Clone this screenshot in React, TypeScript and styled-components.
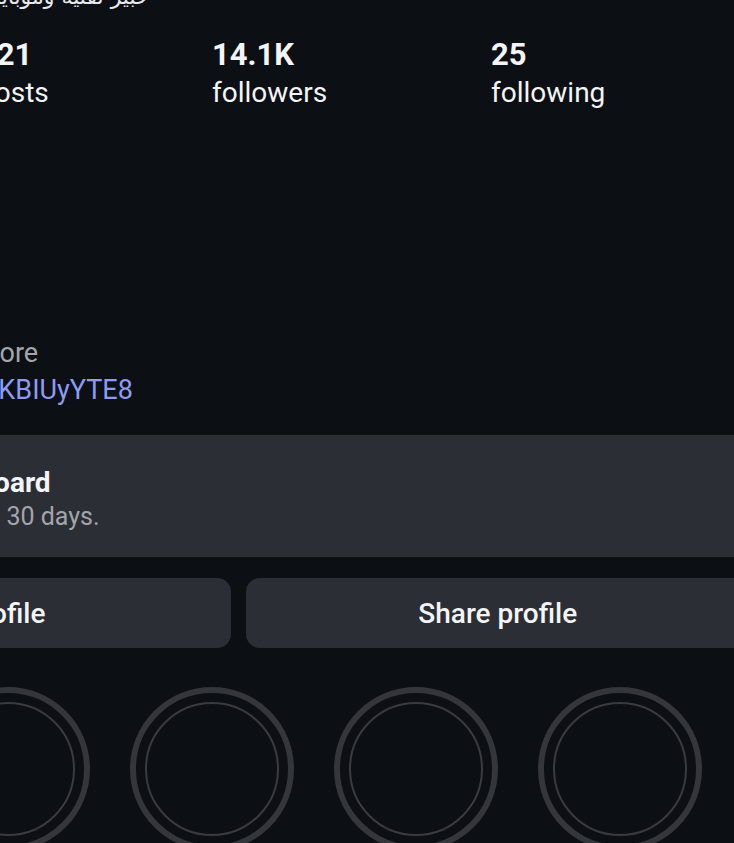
import styled, { createGlobalStyle } from 'styled-components';

const GlobalStyle = createGlobalStyle`
    html, body {
        margin: 0;
        background: #0c0f14;
    }

    body {
        font-family: Roboto, "Noto Sans", "DejaVu Sans", sans-serif;
        color: #f3f4f6;
    }
`;

const Viewport = styled.div`
    width: 734px;
    height: 843px;
    overflow: hidden;
    background: #0c0f14;
`;

const Screen = styled.div`
    width: 1080px;
    margin: -20px 0 0 -302px;
    padding: 0 28px;
    box-sizing: border-box;
`;

const Header = styled.div`
    display: flex;
    gap: 29px;
    height: 355px;
`;

const Avatar = styled.div`
    width: 230px;
    height: 230px;
    margin-top: 40px;
    border-radius: 50%;
    background: #1c1f25;
    flex-shrink: 0;
`;

const Info = styled.div`
    display: flex;
    flex-direction: column;
`;

const Name = styled.div`
    font-family: "DejaVu Sans", "Noto Sans", sans-serif;
    font-size: 22px;
    line-height: 33px;
    height: 33px;
    text-align: left;
    color: #e8e9eb;
`;

const Stats = styled.div`
    display: grid;
    grid-template-columns: 233px 279px auto;
    margin: 23px 0 0 -6px;
`;

const Stat = styled.div`
    display: flex;
    flex-direction: column;
`;

const StatValue = styled.span`
    font-size: 31px;
    font-weight: 700;
    line-height: 38px;
`;

const StatLabel = styled.span`
    font-size: 28px;
    line-height: 38px;
`;

const Bio = styled.div`
    font-size: 27px;
    line-height: 37px;
    white-space: nowrap;
`;

const More = styled.span`
    color: #a4a6ab;
`;

const BioLink = styled.div`
    color: #8d9cf2;
`;

const DashboardCard = styled.div`
    margin-top: 26px;
    height: 122px;
    box-sizing: border-box;
    padding: 31px 26px 0;
    background: #2b2e34;
    border-radius: 14px;
`;

const CardTitle = styled.div`
    font-size: 28px;
    font-weight: 700;
    line-height: 34px;
`;

const CardText = styled.div`
    font-size: 25px;
    line-height: 33px;
    color: #a2a5ab;
`;

const Actions = styled.div`
    display: grid;
    grid-template-columns: 1fr 1fr;
    gap: 15px;
    margin-top: 21px;
`;

const ActionButton = styled.button`
    height: 70px;
    border: none;
    border-radius: 14px;
    background: #2b2e34;
    color: #f3f4f6;
    font-family: Roboto, sans-serif;
    font-size: 28px;
    font-weight: 500;
`;

const Highlights = styled.div`
    display: flex;
    gap: 40px;
    margin: 39px 0 0 -4px;
`;

const Ring = styled.div`
    width: 164px;
    height: 164px;
    box-sizing: border-box;
    border: 6px solid #34363b;
    border-radius: 50%;
    display: flex;
    align-items: center;
    justify-content: center;
    flex-shrink: 0;
`;

const InnerRing = styled.div`
    width: 134px;
    height: 134px;
    box-sizing: border-box;
    border: 2px solid #393b40;
    border-radius: 50%;
`;

const stats = [
    { value: '121', label: 'posts' },
    { value: '14.1K', label: 'followers' },
    { value: '25', label: 'following' },
];

export default function App() {
    return (
        <Viewport>
            <GlobalStyle />
            <Screen>
                <Header>
                    <Avatar />
                    <Info>
                        <Name dir="rtl">خبير تقنية وموبايل</Name>
                        <Stats>
                            {stats.map((s) => (
                                <Stat key={s.label}>
                                    <StatValue>{s.value}</StatValue>
                                    <StatLabel>{s.label}</StatLabel>
                                </Stat>
                            ))}
                        </Stats>
                    </Info>
                </Header>

                <Bio>
                    Daily tech reviews <More>... more</More>
                    <BioLink>youtube.com/shorts/XKBIUyYTE8</BioLink>
                </Bio>

                <DashboardCard>
                    <CardTitle>Professional dashboard</CardTitle>
                    <CardText>15.3K views in the last 30 days.</CardText>
                </DashboardCard>

                <Actions>
                    <ActionButton>Edit profile</ActionButton>
                    <ActionButton>Share profile</ActionButton>
                </Actions>

                <Highlights>
                    {[0, 1, 2, 3, 4].map((i) => (
                        <Ring key={i}>
                            <InnerRing />
                        </Ring>
                    ))}
                </Highlights>
            </Screen>
        </Viewport>
    );
}
